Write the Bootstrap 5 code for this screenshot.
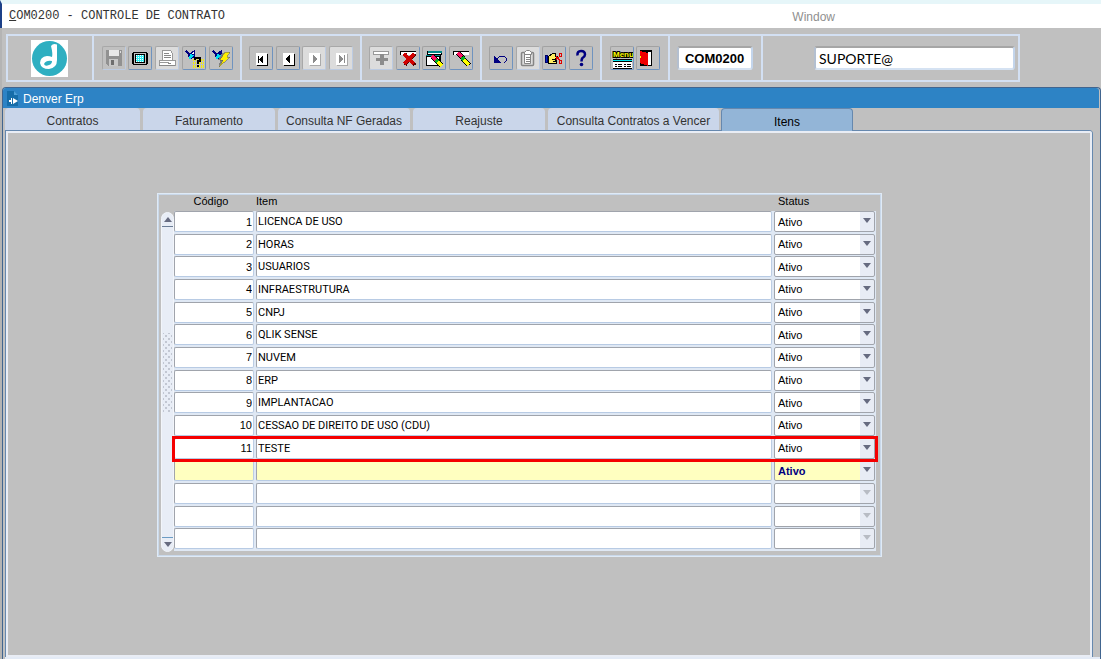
<!DOCTYPE html>
<html lang="pt-BR">
<head>
<meta charset="utf-8">
<meta name="viewport" content="width=device-width, initial-scale=1">
<title>COM0200 - Controle de Contrato</title>
<link href="https://cdn.jsdelivr.net/npm/bootstrap@5.3.0/dist/css/bootstrap.min.css" rel="stylesheet">
<style>
body{background:#c0c0c0;font-family:"Liberation Sans",Arial,sans-serif;font-size:12px;line-height:16px;color:#000}
.app{border-left:2px solid #b4b4b4}
.menu-bar{height:28px;border-top:4px solid #e6f6f9;background:#fff;margin-left:-2px;border-left:2px solid #1c4088}
.menu-bar h1{font:12px/16px "Liberation Mono","Courier New",monospace;color:#333;padding-left:7px}
.menu-bar a{color:#8f8f8f;margin-right:266px;padding-top:2px}
.tool-strip{margin:6px 81px 5px 4px;height:48px;border:2px solid #d3e0f3}
.tool-group{border-right:2px solid #d3e0f3;height:100%}
.g-logo{width:86px;padding-right:2px}.g-5{width:148px}.g-4{width:120px}.g-2{width:68px}.g-code{width:93px;padding-right:2px}
.g-5>div{width:131px}.g-4>div{width:104px}.g-2>div{width:50px}
.tool-btn{width:24px;height:24px;padding:0;background:#c0c0c0;border:1px solid;border-color:#a2a2a2 #6f93bf #6f93bf #a2a2a2;border-radius:2px}
.tool-btn:disabled{border-color:#a8a8a8 #bccbe2 #bccbe2 #a8a8a8}
.tool-btn.pale:disabled{background:#dcdcdc}
.tool-btn svg{display:block;width:22px;height:22px}
.field{height:24px;background:#fff;border:2px solid;border-color:#a6a6a6 #c3d5ec #d5e2f2 #b3bfd0;border-radius:3px;color:#000;padding:0}
.code-field{width:76px;font-weight:700;font-size:13px;text-align:center}
.user-field{width:201px;margin-right:3px;padding-left:3px;font:14px/18px Lato,sans-serif}
.erp-window{border:1px solid #41658f;border-bottom:0;border-radius:4px 4px 0 0}
.erp-title{background:#2d83c5;color:#fff;height:20px;border-radius:3px 3px 0 0;padding-left:4px;margin-right:1px}
.erp-title h2{font-size:12px;line-height:20px;padding-top:2px}
.erp-tabs{padding-left:2px;gap:3px;height:22px}
.erp-tabs .tab-item{width:132px;height:22px;padding:4px 0 0;border:0;border-radius:4px 4px 0 0;background:#cad6ea;color:#333;font-size:12px;line-height:18px;white-space:nowrap}
.erp-tabs .tab-item.first{width:135px}
.erp-tabs .tab-item.wide{width:171px}
.erp-tabs .tab-item.active{background:#93b5d7;color:#000;border:1px solid #6688ae;border-bottom:0;padding-top:3px;margin-left:-1px;height:23px;z-index:1;position:relative}
.erp-panel{margin:0 7px 0 2px;border:1px solid #6688ae;border-bottom:0;border-radius:0 4px 0 0}
.erp-inner{border:2px solid #e9edf5;border-radius:0 2px 0 0;padding:60px 20px 20px 149px}
.item-block{max-width:725px;border:1px solid #dfeaf6;box-shadow:inset 0 0 0 1px #c9d8ea;padding:1px 5px 4px 3px}
.scroller{width:13px;margin-top:17px;height:340px;background:#e8edf6;border-radius:7px;border:1px solid #f2f5fa}
.scroller button{height:14px;width:11px;padding:0;border:0;background:transparent;display:grid;place-items:center}
.scroller .up{border-bottom:1px solid #6c7e96}
.scroller .down{border-top:1px solid #6c9cc4}
.scroller .grip{height:80px;width:9px;margin:0 0 18px 1px;background:radial-gradient(circle,#c2c7d2 1px,transparent 1px) 0 0/6px 6px,radial-gradient(circle,#c2c7d2 1px,transparent 1px) 3px 3px/6px 6px}
.item-table{table-layout:fixed;border-collapse:separate;border-spacing:0;height:356px;font-size:11px;line-height:14px}
.item-table th{height:16px;padding:0;font-weight:400;vertical-align:top;line-height:13px}
.item-table tbody td{padding:0 2px 0 0;vertical-align:top;background:#dfe8f4}
.item-table tbody td:last-child{padding-right:1px}
.item-table input,.item-table select{display:block;width:100%;height:21px;border:1px solid;border-color:#a0a4ac #bccde4 #b8cbe4 #a0a4ac;border-radius:2px;background-color:#fff;padding:0 1px;color:#000;opacity:1;font-size:11px;outline-offset:-2px}
.item-table .num{text-align:right}
.item-table .name{font-family:Roboto,"Liberation Sans",sans-serif}
.item-table select{appearance:none;border-color:#a0a4ac;padding:0 18px 0 3px;background-repeat:no-repeat;background-position:right 3px top 6px,right top;background-size:8px 5px,14px 100%;background-image:url("data:image/svg+xml,%3Csvg xmlns='http://www.w3.org/2000/svg' viewBox='0 0 8 5'%3E%3Cpath d='M0 0h8L4 5z' fill='%23666b80'/%3E%3C/svg%3E"),linear-gradient(#e8ecf5,#e8ecf5)}
.item-table select:disabled{background-image:url("data:image/svg+xml,%3Csvg xmlns='http://www.w3.org/2000/svg' viewBox='0 0 8 5'%3E%3Cpath d='M0 0h8L4 5z' fill='%23b8bcc4'/%3E%3C/svg%3E"),linear-gradient(#e8ecf5,#e8ecf5)}
.item-table .current input,.item-table .current select{background-color:#ffffc0}
.item-table .current select{color:#000080;font-weight:700}
.item-table .marked{outline:3px solid #f50000;outline-offset:-1px}
.erp-foot{height:2px;background:#e4ebf6;margin-left:2px}
</style>
</head>
<body>
<div class="app d-flex flex-column min-vh-100">
  <header class="menu-bar d-flex justify-content-between align-items-center">
    <h1 class="m-0"><u>C</u>OM0200 - CONTROLE DE CONTRATO</h1>
    <a href="#" class="text-decoration-none">Window</a>
  </header>

  <div class="tool-strip d-flex" role="toolbar" aria-label="Ferramentas">
    <div class="tool-group g-logo d-flex align-items-center justify-content-center">
      <svg width="37" height="37" viewBox="0 0 37 37" role="img" aria-label="Denver"><path fill="#fff" d="M0 0h37v37H0z"/><circle cx="18.500" cy="18.500" r="17.500" fill="#2eafc1"/><path fill="#fff" fill-rule="evenodd" d="M20 6Q22 3 26 4.500V20q0 8-8 9-8 0-9-6 0-6 7-7 3 0 5 1 1-3-1-11zM21 21q-6-1-8 3 1 3 5 1 3-1 3-4z"/></svg>
    </div>
    <div class="tool-group g-5 d-flex align-items-center justify-content-center"><div class="d-flex justify-content-between">
      <button class="tool-btn" disabled aria-label="Salvar"><svg viewBox="1 1 22 22" shape-rendering="crispEdges"><path fill="#919191" d="M4 4h16v16H6l-2-2z"/><path fill="#e8e8e8" d="M7 4h10v6H7z"/><path fill="#c8c8c8" d="M7 13h9v7H7z"/><path fill="#6e6e6e" d="M9 14h3v5H9z"/><path fill="#ddd" d="M18 5h1v2h-1z"/></svg></button>
      <button class="tool-btn" aria-label="Tela"><svg viewBox="1 1 22 22" shape-rendering="crispEdges"><path d="M5 6h14v1h1v11h-1v1H5v-1H4V7h1z"/><path fill="#c0c0c0" d="M6 7h12v11H6z"/><path d="M7 8h10v9H7z"/><path fill="#30ecf0" d="M8 9h8v7H8z"/><path stroke="#fff" stroke-dasharray="1 1" d="M8 9.500h8M8 11.500h8M8 13.500h8M8 15.500h8"/></svg></button>
      <button class="tool-btn pale" disabled aria-label="Imprimir"><svg viewBox="1 1 22 22" shape-rendering="crispEdges"><path fill="#fff" stroke="#999" d="M7.500 4.500h8l2 3v7h-10zM4.500 14.500h16v5h-16z"/><path stroke="#888" d="M9 7.500h5M9 9.500h7M9 11.500h7M4 19.500h16M13 17.500h3"/><path fill="#999" d="M5 16h9v1H5z"/></svg></button>
      <button class="tool-btn" aria-label="Entrar consulta"><svg viewBox="1 1 22 22" shape-rendering="crispEdges"><path stroke="#f7f000" stroke-width="9" stroke-dasharray="1 1" d="M11 17.500h11"/><path stroke="#c0c0c0" d="M11 15.500h11M11 18.500h11"/><path fill="#000080" d="M4 4l4 3 5-3v8l-6 1-1-4-3-3z"/><path fill="#00e0f0" d="M8 8l4 1-3 4H7z"/><path fill="#fff" d="M11 6l1 1-1 2-1-1z"/><path fill="none" stroke="#000" stroke-width="2" d="M13 14v-2h5v3h-2v3M15 20h2"/></svg></button>
      <button class="tool-btn" aria-label="Executar consulta"><svg viewBox="1 1 22 22" shape-rendering="crispEdges"><path fill="#000080" d="M4 4l4 3 5-3v8l-6 1-1-4-3-3z"/><path fill="#00e0f0" d="M8 8l4 1-3 4H7z"/><path fill="#808080" d="M13 7h3l-3 5h3l-6 8 1-6H9z"/><path fill="#ffee00" stroke="#555" stroke-width=".5" d="M16 6h5l-3 5h3L10 21l4-7h-3z"/></svg></button>
    </div></div>
    <div class="tool-group g-4 d-flex align-items-center justify-content-center"><div class="d-flex justify-content-between">
      <button class="tool-btn" aria-label="Primeiro"><svg viewBox="1 1 22 22" shape-rendering="crispEdges"><path d="M8 8h11v12H8z"/><path fill="#fff" d="M7 7h11v12H7z"/><path d="M9 10h1v7H9zM14 10v7l-4-3.500z"/></svg></button>
      <button class="tool-btn" aria-label="Anterior"><svg viewBox="1 1 22 22" shape-rendering="crispEdges"><path d="M8 8h11v12H8z"/><path fill="#fff" d="M7 7h11v12H7z"/><path d="M14 9v8l-5-4z"/></svg></button>
      <button class="tool-btn pale" disabled aria-label="Próximo"><svg viewBox="1 1 22 22" shape-rendering="crispEdges"><path fill="#aaa" d="M8 8h11v12H8z"/><path fill="#fff" d="M7 7h11v12H7z"/><path fill="#8c8c8c" d="M11 9v8l5-4z"/></svg></button>
      <button class="tool-btn pale" disabled aria-label="Último"><svg viewBox="1 1 22 22" shape-rendering="crispEdges"><path fill="#aaa" d="M8 8h11v12H8z"/><path fill="#fff" d="M7 7h11v12H7z"/><path fill="#8c8c8c" d="M10 9v8l4-4zM15 9h1v8h-1z"/></svg></button>
    </div></div>
    <div class="tool-group g-4 d-flex align-items-center justify-content-center"><div class="d-flex justify-content-between">
      <button class="tool-btn pale" disabled aria-label="Inserir"><svg viewBox="1 1 22 22" shape-rendering="crispEdges"><path fill="#fff" stroke="#999" d="M4.500 5.500h15v3h-15z"/><path fill="#8c8c8c" d="M11 8h4v4h4v3h-4v4h-4v-4H7v-3h4z"/></svg></button>
      <button class="tool-btn" aria-label="Excluir"><svg viewBox="1 1 22 22" shape-rendering="crispEdges"><path d="M4 5h16v4H4z"/><path fill="#fff" d="M5 6h15v3H5z"/><path stroke="#500" stroke-width="3" d="M9 8l10 11M19 8L9 19"/><path stroke="#d00000" stroke-width="3" d="M8 8l10 10M18 8L8 18"/></svg></button>
      <button class="tool-btn" aria-label="Limpar bloco"><svg viewBox="1 1 22 22" shape-rendering="crispEdges"><path d="M5 5h15v4H5zM4 9h15v11H4z"/><path fill="#088" d="M6 5h14v2H6zM4 9h14v1H4z"/><path fill="#fff" d="M6 7h13v1H6zM5 11h12v8H5z"/><path stroke="#000" stroke-width="5" d="M11 11l9 9"/><path stroke="#ff1060" stroke-width="4" d="M10 10l4 4"/><path stroke="#00b020" stroke-width="4" d="M14 14l2 2"/><path stroke="#ff0" stroke-width="3" d="M16 16l4 4"/></svg></button>
      <button class="tool-btn" aria-label="Limpar registro"><svg viewBox="1 1 22 22" shape-rendering="crispEdges"><path d="M4 5h16v4H4z"/><path fill="#fff" d="M5 6h15v3H5z"/><path stroke="#000" stroke-width="5" d="M9 7l11 12"/><path stroke="#ff1060" stroke-width="4" d="M9 7l4 4"/><path stroke="#00b020" stroke-width="4" d="M13 11l2 3"/><path stroke="#ff0" stroke-width="3" d="M15 14l5 5"/></svg></button>
    </div></div>
    <div class="tool-group g-4 d-flex align-items-center justify-content-center"><div class="d-flex justify-content-between">
      <button class="tool-btn" aria-label="Desfazer"><svg viewBox="1 1 22 22" shape-rendering="crispEdges"><path fill="#000080" d="M5 10v7h7z"/><path fill="none" stroke="#000080" d="M8 13l3-3h4l2 2v3l-2 2"/></svg></button>
      <button class="tool-btn pale" disabled aria-label="Colar"><svg viewBox="1 1 22 22"><rect x="5.500" y="6.500" width="12" height="13" rx="1" fill="#ddd" stroke="#858585" stroke-width="1.500"/><path fill="#fff" stroke="#858585" d="M8.500 8.500h6v9h-6zM8.500 6.500l2-2h3l2 2v2h-7z"/><path stroke="#858585" d="M10 11.500h4M10 13.500h4M10 15.500h4"/></svg></button>
      <button class="tool-btn" aria-label="Recortar"><svg viewBox="1 1 22 22" shape-rendering="crispEdges"><path fill="#0020d0" stroke="#000060" d="M3.500 9.500h2v7h-2z"/><path fill="#ffee60" stroke="#000" d="M6.500 10.500l4-3h3v3h2v2h-2v2h1v3h-8z"/><path stroke="#000" d="M10 13.500h4M11 15.500h3"/><path fill="none" stroke="#e00000" d="M14 13.500l4-3M14 10.500l4 4M17.500 7.500h2v3h-2zM17.500 14.500h2v3h-2z"/></svg></button>
      <button class="tool-btn" aria-label="Ajuda"><svg viewBox="1 1 22 22"><path fill="none" stroke="#000080" stroke-width="2.500" d="M8.500 9.500Q8 5 12 5q4 0 4 3.500 0 2-2.500 3.500-1 1-1 3.500"/><circle cx="12.500" cy="18.500" r="1.800" fill="#000080"/></svg></button>
    </div></div>
    <div class="tool-group g-2 d-flex align-items-center justify-content-center"><div class="d-flex justify-content-between">
      <button class="tool-btn" aria-label="Menu"><svg viewBox="1 1 22 22"><text x="3" y="11" font-family="Liberation Sans" font-size="8" font-weight="700" fill="#ff0" stroke="#000" stroke-width="2" paint-order="stroke">Menu</text><g shape-rendering="crispEdges"><path d="M3 13h19v10H3z"/><path fill="#00e8f0" d="M3 14h19v1H3z"/><path fill="#fff" d="M3 16h19v6H3z"/><path stroke="#000" stroke-dasharray="2 1 4 2" d="M5 18.500h16M5 20.500h16"/></g></svg></button>
      <button class="tool-btn" aria-label="Sair"><svg viewBox="1 1 22 22" shape-rendering="crispEdges"><path d="M4 4h12v16H4z"/><path fill="#fff" d="M12 6h3v13h-3z"/><path fill="#f00000" d="M4 5l8 2v13l-8-3z"/><path fill="#ff0" d="M4 10h1v2H4z"/></svg></button>
    </div></div>
    <div class="tool-group g-code d-flex align-items-center justify-content-center">
      <input class="field code-field" value="COM0200" aria-label="Programa">
    </div>
    <div class="flex-grow-1 d-flex align-items-center justify-content-end">
      <input class="field user-field" value="SUPORTE@" aria-label="Usuário">
    </div>
  </div>

  <main class="erp-window d-flex flex-column flex-grow-1">
    <div class="erp-title d-flex align-items-center gap-1">
      <svg width="12" height="15" viewBox="0 0 12 15" aria-hidden="true"><path fill="#166da9" d="M0 0h7l4 4v11H0z"/><path fill="#4fa0d8" d="M7 0v4h4z"/><path fill="#fff" d="M2 9h2V7h1v6H4v-2H2zM6 7l5 3-5 3z"/></svg>
      <h2 class="m-0 fw-normal">Denver Erp</h2>
    </div>
    <div class="erp-tabs d-flex" role="tablist">
      <button class="tab-item first" role="tab">Contratos</button>
      <button class="tab-item" role="tab">Faturamento</button>
      <button class="tab-item" role="tab">Consulta NF Geradas</button>
      <button class="tab-item" role="tab">Reajuste</button>
      <button class="tab-item wide" role="tab">Consulta Contratos a Vencer</button>
      <button class="tab-item active" role="tab" aria-selected="true">Itens</button>
    </div>
    <section class="erp-panel flex-grow-1 d-flex flex-column">
      <div class="erp-inner flex-grow-1">
        <div class="item-block d-flex">
          <div class="scroller d-flex flex-column justify-content-between flex-shrink-0">
            <button class="up" aria-label="Subir"><svg width="8" height="5" viewBox="0 0 8 5"><path fill="#666b80" d="M0 5h8L4 0z"/></svg></button>
            <div class="grip"></div>
            <button class="down" aria-label="Descer"><svg width="8" height="5" viewBox="0 0 8 5"><path fill="#666b80" d="M0 0h8L4 5z"/></svg></button>
          </div>
          <table class="item-table w-100">
            <colgroup><col style="width:82px"><col><col style="width:102px"></colgroup>
            <thead><tr><th class="text-center" scope="col"><span class="pe-2">Código</span></th><th scope="col">Item</th><th scope="col"><span class="ps-1">Status</span></th></tr></thead>
            <tbody id="rows"></tbody>
          </table>
        </div>
      </div>
    </section>
    <div class="erp-foot"></div>
  </main>
</div>
<script src="https://cdn.jsdelivr.net/npm/bootstrap@5.3.0/dist/js/bootstrap.bundle.min.js"></script>
<script>
const items = ["LICENCA DE USO","HORAS","USUARIOS","INFRAESTRUTURA","CNPJ","QLIK SENSE","NUVEM","ERP","IMPLANTACAO","CESSAO DE DIREITO DE USO (CDU)","TESTE"];
const visibleRows = 15;
let html = "";
for (let i = 0; i < visibleRows; i++) {
  const filled = i < items.length, current = i === items.length;
  const cls = current ? "current" : i === items.length - 1 ? "marked" : "";
  html += `<tr class="${cls}"><td><input class="num" aria-label="Código ${i + 1}" value="${filled ? i + 1 : ""}"></td>
    <td><input class="name" aria-label="Item ${i + 1}" value="${filled ? items[i] : ""}"></td>
    <td><select aria-label="Status ${i + 1}" ${filled || current ? "" : "disabled"}>${filled || current ? "<option>Ativo</option><option>Inativo</option>" : "<option></option>"}</select></td></tr>`;
}
document.getElementById("rows").innerHTML = html;
</script>
</body>
</html>
